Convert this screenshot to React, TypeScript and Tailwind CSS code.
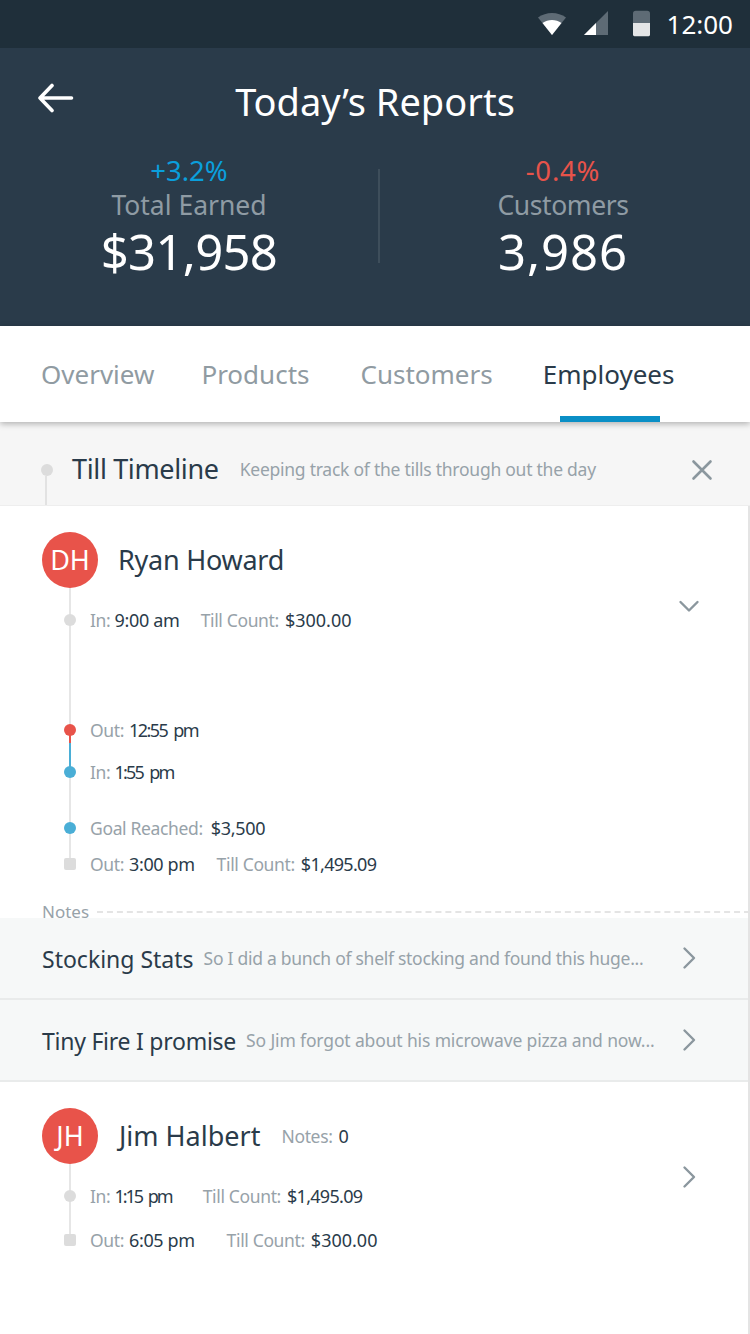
const FONT = "font-['Noto_Sans','Open_Sans',sans-serif]";

function Stat({ delta, deltaColor, label, value, dt = "", lt = "", vt = "tracking-[-0.7px]" }: { delta: string; deltaColor: string; label: string; value: string; dt?: string; lt?: string; vt?: string }) {
  return (
    <div className="flex flex-col items-center pt-[4px]">
      <div className={`text-[27.5px] leading-[30px] ${dt} ${deltaColor}`}>{delta}</div>
      <div className={`mt-[2px] text-[26.5px] leading-[34px] ${lt} text-[#8f9ba4]`}>{label}</div>
      <div className={`text-[49px] leading-[58px] ${vt} text-white`}>{value}</div>
    </div>
  );
}

function Kv({ k, v, gap = "ml-[6px]", vt = "" }: { k: string; v: string; gap?: string; vt?: string }) {
  return (
    <span className="flex items-center whitespace-nowrap">
      <span className="text-[17.5px] tracking-[-0.35px] text-[#97a2a9]">{k}</span>
      <span className={`${gap} ${vt} text-[18px] text-[#2a3b4a]`}>{v}</span>
    </span>
  );
}

function Dot({ kind }: { kind: "grey" | "red" | "blue" | "square" }) {
  const cls =
    kind === "red"
      ? "rounded-full bg-[#e8534a]"
      : kind === "blue"
        ? "rounded-full bg-[#4aaed6]"
        : kind === "square"
          ? "rounded-[2px] bg-[#dcdcdc]"
          : "rounded-full bg-[#dcdcdc]";
  return <span className={`relative z-10 mr-[14px] h-3 w-3 shrink-0 ${cls}`} />;
}

function Row({ kind, className = "", children }: { kind: "grey" | "red" | "blue" | "square"; className?: string; children: React.ReactNode }) {
  return (
    <div className={`flex h-6 items-center ${className}`}>
      <Dot kind={kind} />
      {children}
    </div>
  );
}

function Chevron({ d }: { d: string }) {
  return (
    <svg width="24" height="24" viewBox="0 0 24 24" fill="none" stroke="#8b979e" strokeWidth="2.4" strokeLinecap="round" strokeLinejoin="round">
      <path d={d} />
    </svg>
  );
}

const RIGHT = "M7.5 2.5l9.5 9.5-9.5 9.5";

function Note({ title, body, tt = "", bt = "tracking-[-0.3px]" }: { title: string; body: string; tt?: string; bt?: string }) {
  return (
    <div className="flex h-[82px] items-center border-b-2 border-[#e9ebeb] bg-[#f6f8f8] pl-[42px] pr-[47px]">
      <span className={`whitespace-nowrap pt-[3px] text-[23px] ${tt} text-[#2a3b4a]`}>{title}</span>
      <span className={`ml-[10px] whitespace-nowrap text-[17.5px] ${bt} text-[#97a2a9]`}>{body}</span>
      <span className="ml-auto shrink-0">
        <Chevron d={RIGHT} />
      </span>
    </div>
  );
}

export default function App() {
  return (
    <div className={`relative h-[1334px] w-[750px] overflow-hidden bg-white ${FONT}`}>
      <div className="flex h-12 items-center justify-end bg-[#1f2f3a] pr-[17px]">
        <svg width="30" height="26" viewBox="0 0 30 26" className="mr-[16px]">
          <path d="M1 6.5C9 0.5 21 0.5 29 6.5L15 24Z" fill="#5e6b75" />
          <path d="M5.5 12C11 8 19 8 24.5 12L15 24Z" fill="#fff" />
        </svg>
        <svg width="26" height="26" viewBox="0 0 26 26" className="mr-[24px]">
          <path d="M1 24L25 0V24Z" fill="#5e6b75" />
          <path d="M1 24L13 12V24Z" fill="#fff" />
        </svg>
        <svg width="17" height="28" viewBox="0 0 18 28" className="mr-[17px]">
          <path d="M0 3Q0 0 3 0H15Q18 0 18 3V13H0Z" fill="#5e6b75" />
          <path d="M0 13H18V25.5Q18 27 16.5 27H1.5Q0 27 0 25.5Z" fill="#e4e5e6" />
        </svg>
        <span className="text-[26px] leading-none text-white">12:00</span>
      </div>

      <div className="h-[278px] bg-[#2a3b4a]">
        <div className="relative flex h-[110px] items-center justify-center pb-[5px]">
          <svg width="38" height="30" viewBox="0 0 38 30" className="absolute left-[37px] top-[35px]" fill="none" stroke="#fff" strokeWidth="3.6" strokeLinecap="round" strokeLinejoin="round">
            <path d="M3 15H34.5M15 2.5L3 15L15 27.5" />
          </svg>
          <h1 className="text-[38px] leading-none text-white">Today’s Reports</h1>
        </div>
        <div className="flex h-[115px] items-center">
          <div className="flex w-[378px] justify-center">
            <Stat delta="+3.2%" deltaColor="text-[#0a9fdc]" label="Total Earned" value="$31,958" />
          </div>
          <div className="h-[94px] w-[2px] bg-[#3e4e5b]" />
          <div className="flex w-[366px] justify-center">
            <Stat delta="-0.4%" deltaColor="text-[#e8534a]" label="Customers" value="3,986" dt="tracking-[0.8px]" lt="tracking-[-0.4px]" vt="tracking-[1px]" />
          </div>
        </div>
      </div>

      <div className="relative z-20 flex h-[96px] items-center bg-white pl-[41px] text-[26px] text-[#909ba2] shadow-[0_2px_6px_rgba(0,0,0,0.28)]">
        <span>Overview</span>
        <span className="ml-[47px]">Products</span>
        <span className="ml-[51px]">Customers</span>
        <span className="ml-[50px] text-[#2a3b4a]">Employees</span>
        <span className="absolute bottom-0 left-[560px] h-[6px] w-[100px] bg-[#0a8fc6]" />
      </div>

      <div className="relative flex h-[84px] items-center border-b border-[#eeeeee] bg-[#f6f6f6] pl-[41px] pt-[12px]">
        <span className="absolute bottom-0 left-[45px] top-[54px] w-[2px] bg-[#e2e2e2]" />
        <span className="h-3 w-3 shrink-0 rounded-full bg-[#dcdcdc]" />
        <span className="ml-[19px] text-[27px] tracking-[-0.35px] text-[#2a3b4a]">Till Timeline</span>
        <span className="ml-[21px] text-[17.5px] tracking-[-0.25px] text-[#97a2a9]">Keeping track of the tills through out the day</span>
        <svg width="24" height="24" viewBox="0 0 24 24" className="absolute left-[690px] top-[36px]" fill="none" stroke="#8b979e" strokeWidth="2.6" strokeLinecap="round">
          <path d="M3.5 3.5L20.5 20.5M20.5 3.5L3.5 20.5" />
        </svg>
      </div>

      <div className="border-r-2 border-[#e4e4e4]">
        <div className="relative h-[412px] pl-[64px] pt-[26px]">
          <span className="absolute left-[69px] top-[70px] h-[290px] w-[2px] bg-[#e6e6e6]" />
          <span className="absolute left-[69px] top-[224px] h-[42px] w-[2px] bg-[linear-gradient(#e8534a_0,#e8534a_13px,#4aaed6_13px)]" />
          <div className="ml-[-22px] flex h-14 items-center">
            <span className="relative z-10 flex h-14 w-14 items-center justify-center rounded-full bg-[#e8534a] text-[27px] text-white">DH</span>
            <span className="ml-[20px] text-[27px] tracking-[-0.25px] text-[#2a3b4a]">Ryan Howard</span>
          </div>
          <Row kind="grey" className="mt-[20px]">
            <Kv k="In:" v="9:00 am" gap="ml-[4px]" vt="tracking-[-0.3px]" />
            <span className="ml-[21px]"><Kv k="Till Count:" v="$300.00" /></span>
          </Row>
          <Row kind="red" className="mt-[86px]"><Kv k="Out:" v="12:55 pm" gap="ml-[5px]" vt="tracking-[-1.6px] [word-spacing:3px]" /></Row>
          <Row kind="blue" className="mt-[18px]"><Kv k="In:" v="1:55 pm" gap="ml-[4px]" vt="tracking-[-1.8px] [word-spacing:3.5px]" /></Row>
          <Row kind="blue" className="mt-[32px]"><Kv k="Goal Reached:" v="$3,500" gap="ml-[8px]" vt="tracking-[-0.3px]" /></Row>
          <Row kind="square" className="mt-[12px]">
            <Kv k="Out:" v="3:00 pm" gap="ml-[5px]" vt="tracking-[-0.4px]" />
            <span className="ml-[22px]"><Kv k="Till Count:" v="$1,495.09" vt="tracking-[-0.7px]" /></span>
          </Row>
          <span className="absolute left-[677px] top-[89px]">
            <Chevron d="M3.5 7l8.5 8.5 8.5-8.5" />
          </span>
          <div className="absolute bottom-[-4px] left-[42px] right-[-2px] flex items-center">
            <span className="text-[17px] leading-[20px] text-[#97a2a9]">Notes</span>
            <span className="ml-[8px] h-0 flex-1 border-t-2 border-dashed border-[#e4e4e4]" />
          </div>
        </div>

        <Note title="Stocking Stats" body="So I did a bunch of shelf stocking and found this huge..." bt="tracking-[-0.28px]" />
        <Note title="Tiny Fire I promise" tt="tracking-[-0.25px]" body="So Jim forgot about his microwave pizza and now..." bt="tracking-[-0.14px]" />

        <div className="relative h-[253px] pl-[64px] pt-[26px]">
          <span className="absolute left-[69px] top-[70px] h-[88px] w-[2px] bg-[#e6e6e6]" />
          <div className="ml-[-22px] flex h-14 items-center">
            <span className="relative z-10 flex h-14 w-14 items-center justify-center rounded-full bg-[#e8534a] text-[27px] text-white">JH</span>
            <span className="ml-[21px] text-[27px] text-[#2a3b4a]">Jim Halbert</span>
            <span className="ml-[21px]"><Kv k="Notes:" v="0" /></span>
          </div>
          <Row kind="grey" className="mt-[20px]">
            <Kv k="In:" v="1:15 pm" gap="ml-[4px]" vt="tracking-[-2px] [word-spacing:3px]" />
            <span className="ml-[31px]"><Kv k="Till Count:" v="$1,495.09" vt="tracking-[-0.7px]" /></span>
          </Row>
          <Row kind="square" className="mt-[20px]">
            <Kv k="Out:" v="6:05 pm" gap="ml-[5px]" vt="tracking-[-0.4px]" />
            <span className="ml-[32px]"><Kv k="Till Count:" v="$300.00" /></span>
          </Row>
          <span className="absolute left-[677px] top-[83px]">
            <Chevron d={RIGHT} />
          </span>
        </div>
      </div>
    </div>
  );
}
